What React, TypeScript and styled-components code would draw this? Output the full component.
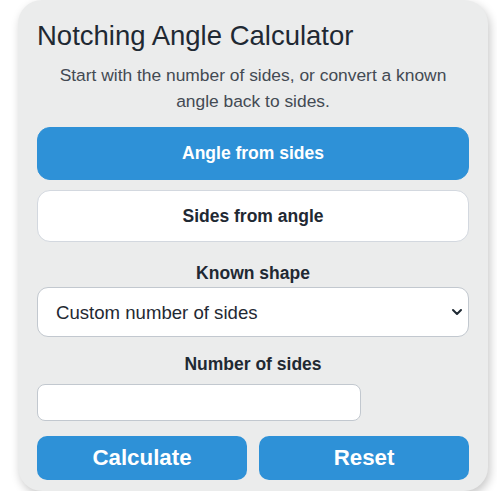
import React from "react";
import styled, { createGlobalStyle } from "styled-components";

const BLUE = "#2e91d7";
const TEXT = "#1f2933";

const GlobalStyle = createGlobalStyle`
  html, body {
    margin: 0;
    padding: 0;
    background: #ffffff;
  }
  body {
    font-family: "Liberation Sans", Arial, sans-serif;
  }
`;

const Card = styled.div`
  box-sizing: border-box;
  width: 470px;
  margin: 0 0 0 18px;
  padding: 20px 19px 11px;
  background: #ebecec;
  border-radius: 24px;
  box-shadow: 2px 4px 10px rgba(0, 0, 0, 0.22);
`;

const Title = styled.h1`
  margin: 0;
  font-size: 27.5px;
  font-weight: 400;
  line-height: 32px;
  color: ${TEXT};
`;

const Intro = styled.p`
  margin: 10px 8px 13px;
  font-size: 17.4px;
  line-height: 26px;
  text-align: center;
  color: #434a53;
`;

const ModeList = styled.div`
  display: flex;
  flex-direction: column;
  gap: 10px;
`;

const ModeButton = styled.button<{ $active?: boolean }>`
  box-sizing: border-box;
  height: ${(p) => (p.$active ? 53 : 52)}px;
  width: 100%;
  border-radius: 13px;
  border: 1px solid ${(p) => (p.$active ? BLUE : "#d3d8df")};
  background: ${(p) => (p.$active ? BLUE : "#ffffff")};
  color: ${(p) => (p.$active ? "#ffffff" : TEXT)};
  font-family: inherit;
  font-size: 17.5px;
  font-weight: 700;
  cursor: pointer;
`;

const Field = styled.div`
  display: flex;
  flex-direction: column;
`;

const Label = styled.label<{ $top: number; $bottom: number }>`
  font-size: 17.5px;
  font-weight: 700;
  line-height: 22px;
  color: ${TEXT};
  text-align: center;
  margin: ${(p) => p.$top}px 0 ${(p) => p.$bottom}px;
`;

const SelectWrap = styled.div`
  position: relative;
`;

const Select = styled.select`
  box-sizing: border-box;
  appearance: none;
  width: 100%;
  height: 50px;
  padding: 0 40px 0 18px;
  border: 1px solid #c2c8cf;
  border-radius: 11px;
  background: #ffffff;
  font-family: inherit;
  font-size: 18.6px;
  color: ${TEXT};
`;

const Chevron = styled.svg`
  position: absolute;
  right: 6px;
  top: 50%;
  width: 12px;
  height: 12px;
  transform: translateY(-50%);
  pointer-events: none;
`;

const NumberInput = styled.input`
  box-sizing: border-box;
  width: 324px;
  height: 37px;
  border: 1px solid #c2c8cf;
  border-radius: 8px;
  background: #ffffff;
  padding: 0 10px;
  font-family: inherit;
  font-size: 16px;
`;

const Actions = styled.div`
  display: grid;
  grid-template-columns: 1fr 1fr;
  gap: 12px;
  margin-top: 15px;
`;

const ActionButton = styled.button`
  height: 44px;
  border: none;
  border-radius: 10px;
  background: ${BLUE};
  color: #ffffff;
  font-family: inherit;
  font-size: 22.3px;
  font-weight: 700;
  cursor: pointer;
`;

export default function App() {
  return (
    <>
      <GlobalStyle />
      <Card>
        <Title>Notching Angle Calculator</Title>
        <Intro>
          Start with the number of sides, or convert a known angle back to
          sides.
        </Intro>
        <ModeList>
          <ModeButton $active>Angle from sides</ModeButton>
          <ModeButton>Sides from angle</ModeButton>
        </ModeList>
        <Field>
          <Label $top={20} $bottom={3}>Known shape</Label>
          <SelectWrap>
            <Select defaultValue="custom">
              <option value="custom">Custom number of sides</option>
            </Select>
            <Chevron viewBox="0 0 12 12">
              <path
                d="M2 4 L6 8 L10 4"
                fill="none"
                stroke="#1f2933"
                strokeWidth="2"
                strokeLinecap="round"
                strokeLinejoin="round"
              />
            </Chevron>
          </SelectWrap>
        </Field>
        <Field>
          <Label $top={16} $bottom={9}>Number of sides</Label>
          <NumberInput type="number" />
        </Field>
        <Actions>
          <ActionButton>Calculate</ActionButton>
          <ActionButton>Reset</ActionButton>
        </Actions>
      </Card>
    </>
  );
}
